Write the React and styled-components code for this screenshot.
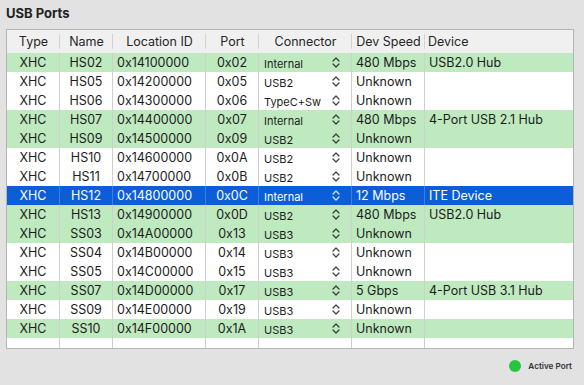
import React from 'react';
import styled, { createGlobalStyle } from 'styled-components';

const ports = [
    { name: 'HS02', loc: '0x14100000', port: '0x02', conn: 'Internal', speed: '480 Mbps', device: 'USB2.0 Hub', active: true },
    { name: 'HS05', loc: '0x14200000', port: '0x05', conn: 'USB2', speed: 'Unknown', device: '' },
    { name: 'HS06', loc: '0x14300000', port: '0x06', conn: 'TypeC+Sw', speed: 'Unknown', device: '' },
    { name: 'HS07', loc: '0x14400000', port: '0x07', conn: 'Internal', speed: '480 Mbps', device: '4-Port USB 2.1 Hub', active: true },
    { name: 'HS09', loc: '0x14500000', port: '0x09', conn: 'USB2', speed: 'Unknown', device: '', active: true },
    { name: 'HS10', loc: '0x14600000', port: '0x0A', conn: 'USB2', speed: 'Unknown', device: '' },
    { name: 'HS11', loc: '0x14700000', port: '0x0B', conn: 'USB2', speed: 'Unknown', device: '' },
    { name: 'HS12', loc: '0x14800000', port: '0x0C', conn: 'Internal', speed: '12 Mbps', device: 'ITE Device', selected: true },
    { name: 'HS13', loc: '0x14900000', port: '0x0D', conn: 'USB2', speed: '480 Mbps', device: 'USB2.0 Hub', active: true },
    { name: 'SS03', loc: '0x14A00000', port: '0x13', conn: 'USB3', speed: 'Unknown', device: '', active: true },
    { name: 'SS04', loc: '0x14B00000', port: '0x14', conn: 'USB3', speed: 'Unknown', device: '' },
    { name: 'SS05', loc: '0x14C00000', port: '0x15', conn: 'USB3', speed: 'Unknown', device: '' },
    { name: 'SS07', loc: '0x14D00000', port: '0x17', conn: 'USB3', speed: '5 Gbps', device: '4-Port USB 3.1 Hub', active: true },
    { name: 'SS09', loc: '0x14E00000', port: '0x19', conn: 'USB3', speed: 'Unknown', device: '' },
    { name: 'SS10', loc: '0x14F00000', port: '0x1A', conn: 'USB3', speed: 'Unknown', device: '', active: true },
];

const columns = [
    { label: 'Type', align: 'center' },
    { label: 'Name', align: 'center' },
    { label: 'Location ID', align: 'center' },
    { label: 'Port', align: 'center' },
    { label: 'Connector', align: 'center' },
    { label: 'Dev Speed', align: 'center' },
    { label: 'Device', align: 'left' },
];

const Chevrons = () => (
    <svg width="8" height="11" viewBox="0 0 8 11" fill="none" stroke="currentColor" strokeWidth="1.2" strokeLinecap="round" strokeLinejoin="round">
        <path d="M1 4 L4 1 L7 4" />
        <path d="M1 7 L4 10 L7 7" />
    </svg>
);

const App = () => {
    return (
        <>
            <GlobalStyle />
            <Page>
                <Title>USB Ports</Title>
                <Table>
                    <HeaderRow>
                        {columns.map((c, i) => (
                            <HeadCell key={c.label} $align={c.align} $last={i === columns.length - 1}>
                                {c.label}
                            </HeadCell>
                        ))}
                    </HeaderRow>
                    {ports.map(p => {
                        const tone = p.selected ? 'selected' : p.active ? 'active' : 'plain';
                        return (
                            <Row key={p.name} $tone={tone}>
                                <Cell $align="center">XHC</Cell>
                                <Cell $align="center">{p.name}</Cell>
                                <Cell $align="left">{p.loc}</Cell>
                                <Cell $align="center">{p.port}</Cell>
                                <ConnectorCell>
                                    <span>{p.conn}</span>
                                    <Chevrons />
                                </ConnectorCell>
                                <Cell $align="left">{p.speed}</Cell>
                                <Cell $align="left" $last>{p.device}</Cell>
                            </Row>
                        );
                    })}
                    <FillerRow>
                        {columns.map((c, i) => <Filler key={c.label} $last={i === columns.length - 1} />)}
                    </FillerRow>
                </Table>
                <Legend>
                    <Dot />
                    <LegendText>Active Port</LegendText>
                </Legend>
            </Page>
        </>
    );
};

export default App;

const GlobalStyle = createGlobalStyle`
    html, body {
        margin: 0;
        padding: 0;
        background: #e2e2e2;
    }
    body {
        font-family: Inter, "Liberation Sans", Arial, sans-serif;
        color: #1c1c1c;
    }
`;

const Page = styled.div`
    width: 584px;
    height: 385px;
    box-sizing: border-box;
    padding: 4px 10px 0 6px;
    background: #e2e2e2;
`;

const Title = styled.div`
    font-size: 13px;
    font-weight: 700;
    line-height: 18px;
    color: #222;
    margin-bottom: 7px;
`;

const grid = `
    display: grid;
    grid-template-columns: 53px 53px 93px 53px 93px 73px 148px;
`;

const Table = styled.div`
    width: 568px;
    box-sizing: border-box;
    border: 1px solid #b4b4b4;
    background: #ffffff;
`;

const HeaderRow = styled.div`
    ${grid}
    height: 23px;
    background: #f0f0f0;
`;

const HeadCell = styled.div`
    display: flex;
    align-items: center;
    justify-content: ${p => (p.$align === 'left' ? 'flex-start' : 'center')};
    padding: 0 3px;
    font-size: 12.5px;
    color: #262626;
    position: relative;
    &::after {
        content: '';
        display: ${p => (p.$last ? 'none' : 'block')};
        position: absolute;
        right: 0;
        top: 4px;
        bottom: 4px;
        width: 1px;
        background: #d2d2d2;
    }
`;

const tones = {
    plain: { bg: '#ffffff', fg: '#1c1c1c', line: '#cfcfcf' },
    active: { bg: '#bfeac0', fg: '#1c1c1c', line: '#cfcfcf' },
    selected: { bg: '#0b5ed8', fg: '#ffffff', line: '#3f7fdf' },
};

const Row = styled.div`
    ${grid}
    height: 19px;
    background: ${p => tones[p.$tone].bg};
    color: ${p => tones[p.$tone].fg};
    --line: ${p => tones[p.$tone].line};
`;

const Cell = styled.div`
    display: flex;
    align-items: center;
    justify-content: ${p => (p.$align === 'left' ? 'flex-start' : 'center')};
    padding: 0 4px;
    font-size: 12.5px;
    white-space: nowrap;
    overflow: hidden;
    border-right: ${p => (p.$last ? 'none' : '1px solid var(--line)')};
`;

const ConnectorCell = styled.div`
    display: flex;
    align-items: center;
    justify-content: space-between;
    padding: 2px 11px 0 5px;
    font-size: 11px;
    border-right: 1px solid var(--line);
    svg {
        margin-top: -2px;
        opacity: 0.85;
    }
`;

const FillerRow = styled.div`
    ${grid}
    height: 10px;
`;

const Filler = styled.div`
    border-right: ${p => (p.$last ? 'none' : '1px solid #cfcfcf')};
`;

const Legend = styled.div`
    display: flex;
    align-items: center;
    justify-content: flex-end;
    gap: 7px;
    margin-top: 11px;
    padding-right: 2px;
`;

const Dot = styled.span`
    width: 12px;
    height: 12px;
    border-radius: 50%;
    background: #27c43f;
`;

const LegendText = styled.span`
    font-size: 8.2px;
    font-weight: 600;
    color: #333;
`;
